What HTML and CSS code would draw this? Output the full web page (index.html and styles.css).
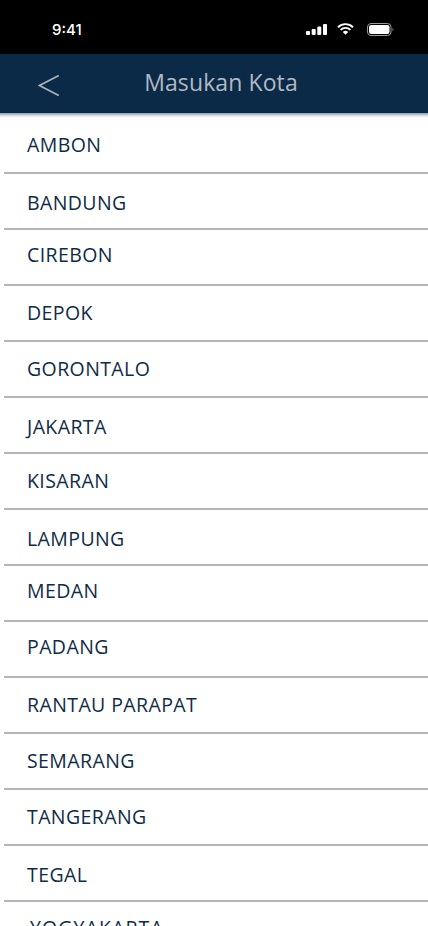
FILE: index.html
```html
<!DOCTYPE html>
<html lang="en">
<head>
    <meta charset="UTF-8">
    <meta name="viewport" content="width=device-width, initial-scale=1.0">
    <title>Masukan Kota</title>
    <link rel="stylesheet" href="styles.css">
</head>
<body>
    <div class="phone">
        <div class="status-bar">
            <span class="status-time">9:41</span>
            <div class="status-icons">
                <svg class="icon-signal" width="21" height="11" viewBox="0 0 21 11"><rect x="0" y="7" width="4" height="4" rx="1" fill="#fff"/><rect x="5.700" y="5" width="4" height="6" rx="1" fill="#fff"/><rect x="11.300" y="2.500" width="4" height="8.500" rx="1" fill="#fff"/><rect x="17" y="0" width="4" height="11" rx="1" fill="#fff"/></svg>
                <svg class="icon-wifi" width="17" height="12" viewBox="0 0 17 12"><path d="M1 4.200a10.800 10.800 0 0 1 15 0M3.600 6.900a7 7 0 0 1 9.800 0" fill="none" stroke="#fff" stroke-width="1.900"/><path d="M5.800 9a3.900 3.900 0 0 1 5.400 0L8.500 11.800z" fill="#fff"/></svg>
                <svg class="icon-battery" width="27" height="13" viewBox="0 0 27 13"><rect x="0.500" y="0.500" width="23.500" height="12" rx="3.500" fill="none" stroke="#9a9a9a"/><rect x="2" y="2" width="20.500" height="9" rx="2.200" fill="#fff"/><path d="M25.300 4.800c.8.300 1.200.9 1.200 1.700s-.4 1.400-1.200 1.700z" fill="#666"/></svg>
            </div>
        </div>
        <header class="nav-bar">
            <svg class="back-icon" width="22" height="23" viewBox="0 0 22 23"><path d="M20.800 1.500 1.500 11.500l19.300 10" fill="none" stroke="#a9b1bb" stroke-width="1.800"/></svg>
            <h1 class="nav-title">Masukan Kota</h1>
        </header>
        <ul class="city-list">
            <li class="city">AMBON</li>
            <li class="city city-low">BANDUNG</li>
            <li class="city city-high">CIREBON</li>
            <li class="city">DEPOK</li>
            <li class="city">GORONTALO</li>
            <li class="city city-low">JAKARTA</li>
            <li class="city">KISARAN</li>
            <li class="city city-low">LAMPUNG</li>
            <li class="city city-high">MEDAN</li>
            <li class="city city-high">PADANG</li>
            <li class="city">RANTAU PARAPAT</li>
            <li class="city">SEMARANG</li>
            <li class="city">TANGERANG</li>
            <li class="city city-low">TEGAL</li>
            <li class="city city-last">YOGYAKARTA</li>
        </ul>
    </div>
</body>
</html>
```

FILE: styles.css
```css
body {
    margin: 0;
    background-color: #fff;
    font-family: 'Open Sans', 'Lato', sans-serif;
}

.phone {
    width: 428px;
    height: 926px;
    overflow: hidden;
}

.status-bar {
    height: 54px;
    background-color: #000;
    display: flex;
    justify-content: space-between;
    align-items: center;
    padding: 4px 34px 0 52px;
    box-sizing: border-box;
}

.status-time {
    color: #fff;
    font-family: 'Inter', sans-serif;
    font-size: 15px;
    font-weight: 500;
}

.status-icons {
    display: flex;
    align-items: center;
}

.icon-wifi {
    margin-left: 10px;
}

.icon-battery {
    margin-left: 13px;
}

.nav-bar {
    height: 59px;
    box-sizing: border-box;
    padding: 0 0 4px 14px;
    background-color: #0a2a47;
    display: flex;
    align-items: center;
    justify-content: center;
    position: relative;
}

.back-icon {
    position: absolute;
    left: 38px;
    top: 20px;
}

.nav-title {
    margin: 0;
    color: #b3b9c2;
    font-size: 23px;
    font-weight: 400;
    letter-spacing: 0.1px;
}

.city-list {
    list-style: none;
    margin: 0;
    padding: 5px 0 0 4px;
    background: linear-gradient(#8c9bac, #e4e8ec 3px, #fff 5px) no-repeat;
}

.city {
    height: 56px;
    box-sizing: border-box;
    border-bottom: 2px solid #b5b5b5;
    display: flex;
    align-items: center;
    padding-left: 23px;
    padding-bottom: 2px;
    color: #0f2b46;
    font-size: 19.500px;
    letter-spacing: 0.4px;
}

.city-low {
    padding-top: 2px;
    padding-bottom: 0;
}

.city-high {
    padding-bottom: 6px;
}

.city-last {
    border-bottom: 0;
    padding-left: 26px;
    padding-bottom: 6px;
    letter-spacing: 1.100px;
}
```
